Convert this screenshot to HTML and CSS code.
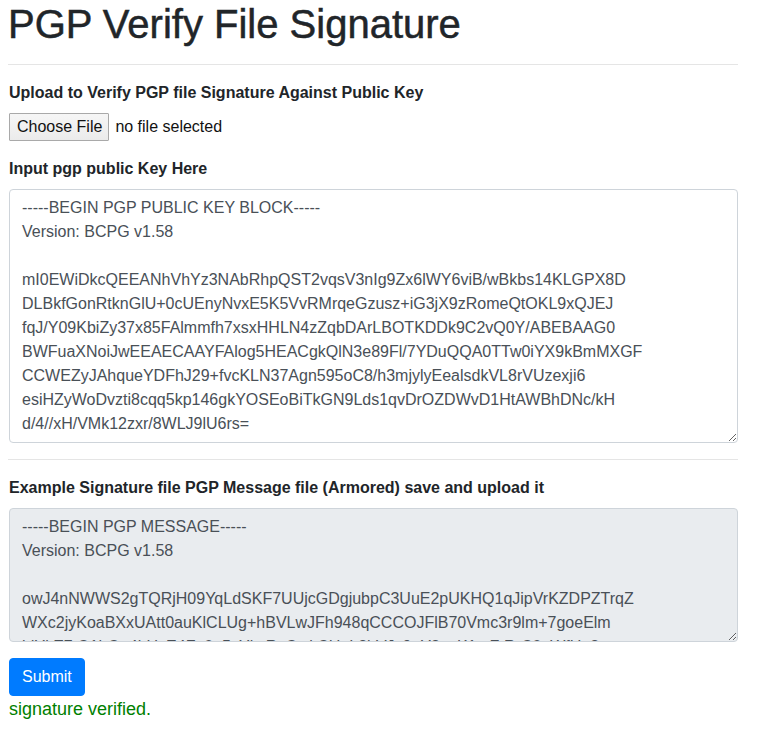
FILE: index.html
```html
<!DOCTYPE html>
<html lang="en">
<head>
<meta charset="utf-8">
<title>PGP Verify File Signature</title>
<link rel="stylesheet" href="styles.css">
</head>
<body>
<main class="page">
  <h1 class="title">PGP Verify File Signature</h1>
  <hr class="rule">
  <form class="form">
    <div class="group">
      <label class="label">Upload to Verify PGP file Signature Against Public Key</label>
      <div class="file">
        <span class="file-btn">Choose File</span>
        <span class="file-name">no file selected</span>
      </div>
    </div>
    <div class="group">
      <label class="label">Input pgp public Key Here</label>
      <textarea class="control" rows="10">-----BEGIN PGP PUBLIC KEY BLOCK-----
Version: BCPG v1.58

mI0EWiDkcQEEANhVhYz3NAbRhpQST2vqsV3nIg9Zx6lWY6viB/wBkbs14KLGPX8D
DLBkfGonRtknGlU+0cUEnyNvxE5K5VvRMrqeGzusz+iG3jX9zRomeQtOKL9xQJEJ
fqJ/Y09KbiZy37x85FAlmmfh7xsxHHLN4zZqbDArLBOTKDDk9C2vQ0Y/ABEBAAG0
BWFuaXNoiJwEEAECAAYFAlog5HEACgkQlN3e89Fl/7YDuQQA0TTw0iYX9kBmMXGF
CCWEZyJAhqueYDFhJ29+fvcKLN37Agn595oC8/h3mjylyEealsdkVL8rVUzexji6
esiHZyWoDvzti8cqq5kp146gkYOSEoBiTkGN9Lds1qvDrOZDWvD1HtAWBhDNc/kH
d/4//xH/VMk12zxr/8WLJ9lU6rs=

</textarea>
    </div>
    <hr class="rule">
    <div class="group">
      <label class="label">Example Signature file PGP Message file (Armored) save and upload it</label>
      <textarea class="control" rows="5" readonly>-----BEGIN PGP MESSAGE-----
Version: BCPG v1.58

owJ4nNWWS2gTQRjH09YqLdSKF7UUjcGDgjubpC3UuE2pUKHQ1qJipVrKZDPZTrqZ
WXc2jyKoaBXxUAtt0auKlCLUg+hBVLwJFh948qCCCOJFlB70Vmc3r9lm+7goeElm
jdYkE7tQ1hGo4bUsE4Fq0q5sYkxRzGwkCUqL2bVJc9gY3qxK1mZtRrC0pWfUo8x
-----END PGP MESSAGE-----</textarea>
    </div>
    <button type="button" class="btn">Submit</button>
    <p class="status">signature verified.</p>
  </form>
</main>
</body>
</html>
```

FILE: styles.css
```css
* { box-sizing: border-box; }

html, body {
  margin: 0;
  padding: 0;
  background: #fff;
}

body {
  font-family: "Liberation Sans", Arial, Helvetica, sans-serif;
  font-size: 16px;
  line-height: 24px;
  color: #212529;
}

.page {
  width: 730px;
  margin: 0 0 0 8px;
}

.title {
  margin: 0 0 8px 0;
  font-size: 40px;
  line-height: 48px;
  font-weight: 400;
  color: #212529;
  -webkit-text-stroke: 0.5px #212529;
}

.rule {
  margin: 16px 0;
  border: 0;
  border-top: 1px solid rgba(0, 0, 0, 0.1);
  height: 0;
}

.form {
  margin: 0;
}

.group {
  margin-bottom: 16px;
}

.label {
  display: block;
  margin-bottom: 8px;
  font-weight: 700;
  padding-left: 1px;
}

.file {
  display: flex;
  align-items: center;
  gap: 6px;
  height: 28px;
  padding-left: 1px;
}

.file-btn {
  display: inline-block;
  height: 28px;
  padding: 0 6px 0 7px;
  line-height: 26px;
  font-size: 16px;
  color: #111;
  background: linear-gradient(#f6f6f6, #ebebeb);
  border: 1px solid #a9a9a9;
  border-radius: 1px;
}

.file-name {
  font-size: 16px;
  color: #111;
}

.control {
  display: block;
  margin-left: 1px;
  width: calc(100% - 1px);
  padding: 6px 12px;
  font-family: "Liberation Sans", Arial, Helvetica, sans-serif;
  font-size: 16px;
  line-height: 24px;
  color: #495057;
  background: #fff;
  border: 1px solid #ced4da;
  border-radius: 4px;
  resize: vertical;
  overflow: hidden;
}

.control[readonly] {
  background: #e9ecef;
}

.btn {
  display: inline-block;
  margin-left: 1px;
  padding: 6px 12px;
  font-family: "Liberation Sans", Arial, Helvetica, sans-serif;
  font-size: 16px;
  line-height: 24px;
  color: #fff;
  background: #007bff;
  border: 1px solid #007bff;
  border-radius: 4px;
}

.status {
  margin: 0;
  padding-left: 1px;
  font-size: 18px;
  line-height: 27px;
  color: #008000;
}
```
